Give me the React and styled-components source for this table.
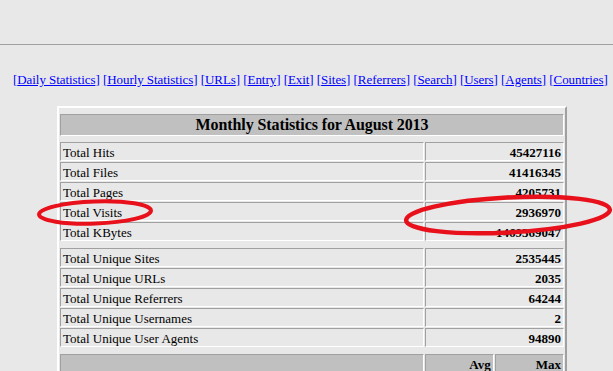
import React from "react";
import styled, { createGlobalStyle } from "styled-components";

const Global = createGlobalStyle`
  html, body { margin: 0; padding: 0; background: #e8e8e8; }
  body { font-family: "Liberation Serif", "Times New Roman", serif; color: #000; }
`;

const Page = styled.div`
  position: relative;
  width: 613px;
  height: 371px;
  overflow: hidden;
  background: #e8e8e8;
`;

const TopArea = styled.div`
  height: 44px;
`;

const Rule = styled.div`
  height: 1px;
  background: #a0a0a0;
`;

const Nav = styled.nav`
  padding: 27px 0 0 13px;
  font-size: 13px;
  line-height: 15px;
  letter-spacing: -0.06px;
  white-space: nowrap;
`;

const NavLink = styled.a`
  color: #0000ff;
  text-decoration: underline;
`;

const TableWrap = styled.div`
  padding: 19px 0 0 57px;
`;

const Table = styled.table`
  width: 510px;
  border-collapse: separate;
  border-spacing: 1px;
  border: 2px solid;
  border-color: #ffffff #a0a0a0 #a0a0a0 #ffffff;
  font-size: 13px;
  line-height: 15px;
`;

const SpacerCell = styled.td`
  height: ${(p) => p.$h || 4}px;
  padding: 0;
  border: 0;
`;

const Cell = styled.td`
  padding: 2px 2px 0;
  border: 1px solid;
  border-color: #a0a0a0 #ffffff #ffffff #a0a0a0;
  background: ${(p) => (p.$head ? "#c0c0c0" : "#e8e8e8")};
  text-align: ${(p) => (p.$right ? "right" : p.$center ? "center" : "left")};
  font-weight: ${(p) => (p.$bold ? "bold" : "normal")};
  white-space: nowrap;
`;

const TitleCell = styled(Cell)`
  font-size: 16px;
  line-height: 18px;
  padding: 1px 2px;
  letter-spacing: -0.1px;
`;

const Overlay = styled.svg`
  position: absolute;
  left: 0;
  top: 0;
  pointer-events: none;
`;

const links = [
  "Daily Statistics",
  "Hourly Statistics",
  "URLs",
  "Entry",
  "Exit",
  "Sites",
  "Referrers",
  "Search",
  "Users",
  "Agents",
  "Countries",
];

const group1 = [
  ["Total Hits", "45427116"],
  ["Total Files", "41416345"],
  ["Total Pages", "4205731"],
  ["Total Visits", "2936970"],
  ["Total KBytes", "1469369047"],
];

const group2 = [
  ["Total Unique Sites", "2535445"],
  ["Total Unique URLs", "2035"],
  ["Total Unique Referrers", "64244"],
  ["Total Unique Usernames", "2"],
  ["Total Unique User Agents", "94890"],
];

const Row = ({ label, value }) => (
  <tr>
    <Cell style={{ width: 363 }}>{label}</Cell>
    <Cell colSpan={2} $right $bold>
      {value}
    </Cell>
  </tr>
);

const Spacer = ({ h }) => (
  <tr>
    <SpacerCell colSpan={3} $h={h} />
  </tr>
);

export default function App() {
  return (
    <Page>
      <Global />
      <TopArea />
      <Rule />
      <Nav>
        {links.map((l, i) => (
          <React.Fragment key={l}>
            {i > 0 && " "}
            <NavLink href="#">[{l}]</NavLink>
          </React.Fragment>
        ))}
      </Nav>
      <TableWrap>
        <Table>
          <tbody>
            <Spacer />
            <tr>
              <TitleCell colSpan={3} $head $center $bold>
                Monthly Statistics for August 2013
              </TitleCell>
            </tr>
            <Spacer />
            {group1.map(([l, v]) => (
              <Row key={l} label={l} value={v} />
            ))}
            <Spacer h={5} />
            {group2.map(([l, v]) => (
              <Row key={l} label={l} value={v} />
            ))}
            <Spacer h={5} />
            <tr>
              <Cell $head>&nbsp;</Cell>
              <Cell $head $right $bold style={{ width: 64 }}>
                Avg
              </Cell>
              <Cell $head $right $bold style={{ width: 64 }}>
                Max
              </Cell>
            </tr>
          </tbody>
        </Table>
      </TableWrap>
      <Overlay width="613" height="371" viewBox="0 0 613 371">
        <ellipse
          cx="95"
          cy="212.5"
          rx="56"
          ry="11"
          fill="none"
          stroke="#e8101a"
          strokeWidth="4"
          transform="rotate(-2 95 212.5)"
        />
        <ellipse
          cx="508"
          cy="215"
          rx="102"
          ry="17.5"
          fill="none"
          stroke="#e8101a"
          strokeWidth="4.5"
          transform="rotate(-3 508 215)"
        />
      </Overlay>
    </Page>
  );
}
